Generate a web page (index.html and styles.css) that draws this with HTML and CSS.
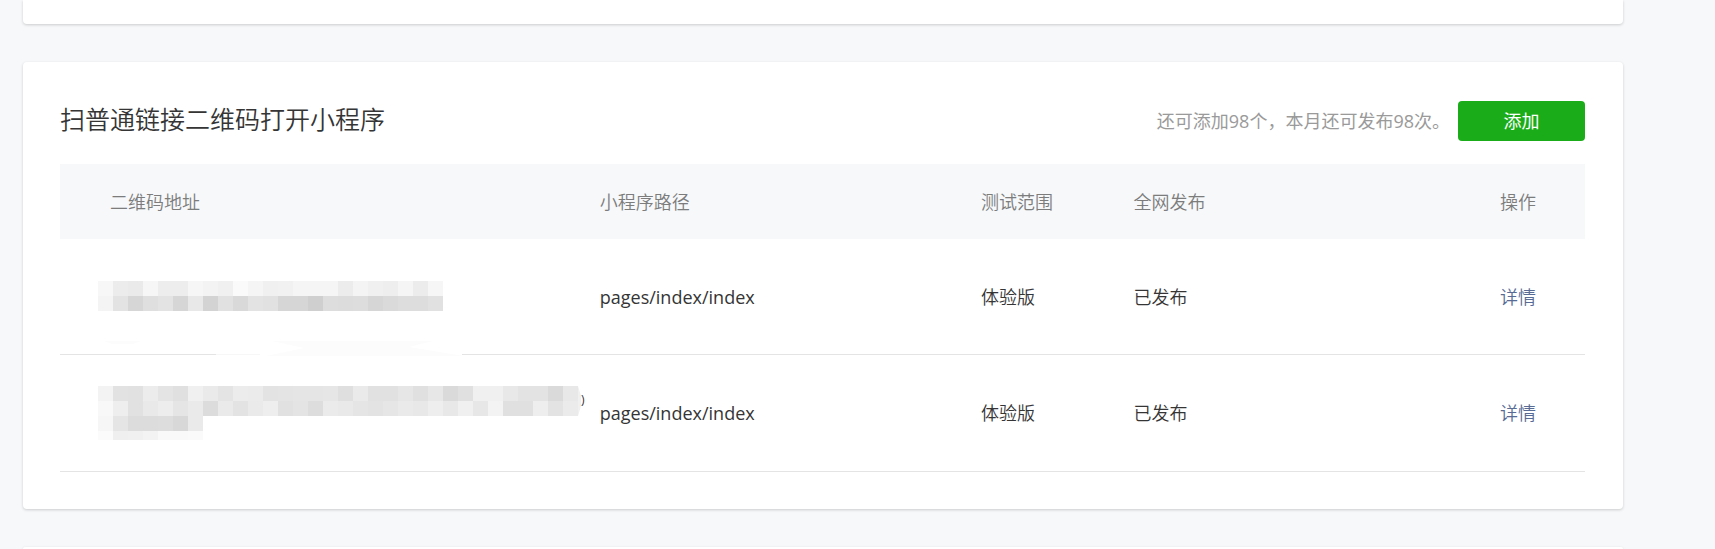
FILE: index.html
```html
<!DOCTYPE html>
<html lang="zh-CN">
<head>
<meta charset="utf-8">
<title>扫普通链接二维码打开小程序</title>
<link rel="stylesheet" href="styles.css">
</head>
<body>
<main class="page">
  <section class="card card-previous"></section>
  <section class="card card-links">
    <header class="card-head">
      <h2 class="card-title">扫普通链接二维码打开小程序</h2>
      <div class="card-actions">
        <span class="quota">还可添加98个，本月还可发布98次。</span>
        <button class="btn-add" type="button">添加</button>
      </div>
    </header>
    <table class="links">
      <colgroup>
        <col class="col-url"><col class="col-path"><col class="col-scope"><col class="col-publish"><col>
      </colgroup>
      <thead>
        <tr><th>二维码地址</th><th>小程序路径</th><th>测试范围</th><th>全网发布</th><th class="op">操作</th></tr>
      </thead>
      <tbody>
        <tr>
          <td class="url">
            <svg class="mosaic" width="345" height="32" data-rows="f7eceaf6ededf6f3f0faf5f0f1f5f5f5ecf4f0eef5ecf6 f4e3d6dfe3d6e8d3e1d9e3e1d6d6cfdddcddd6dadddde1" aria-hidden="true">
              <path fill="#fff" d="M118 72h246v4H118z"/>
              <path fill="#f7f7f7" d="M118 73h44v1h-44z"/>
              <path fill="#fcfcfc" d="M6 60h37l-8 3H14zM174 60h161l-24 6 24 4 31 5H168l38-8z"/>
            </svg>
          </td>
          <td class="path">pages/index/index</td><td>体验版</td><td>已发布</td>
          <td class="op"><a href="#detail-1">详情</a></td>
        </tr>
        <tr>
          <td class="url">
            <svg class="mosaic" width="488" height="54" data-rows="f3e2e1ece4e0f0eae4ecebe3e4e5e5e6dfeae1e1e6e0e7dae0f0f0e8e3e3dae8 f8eee1e9ede5eadceae3eaeee1e4ddebe9e5e3e6eae8eee8f0e7f3e0e0eee3eb f6e5dcdcddd8ea fbeff0f3f9f9fa" aria-hidden="true">
              <path fill="#f0f0f0" d="M480 0l3 10v10l-3 10z"/>
              <text class="remnant" x="483" y="18">)</text>
            </svg>
          </td>
          <td class="path">pages/index/index</td><td>体验版</td><td>已发布</td>
          <td class="op"><a href="#detail-2">详情</a></td>
        </tr>
      </tbody>
    </table>
  </section>
  <section class="card card-next"></section>
</main>
<script src="mosaic.js"></script>
</body>
</html>
```
FILE: styles.css
```css
* { box-sizing: border-box; }
html { background: #f6f8fa; }
body {
  margin: 0;
  color: #353535;
  font-family: "Open Sans", "Noto Sans CJK SC", sans-serif;
  font-size: 18px;
  font-weight: 350;
  line-height: 28px;
}
.page {
  display: flex;
  flex-direction: column;
  gap: 38px;
  min-height: 100vh;
  padding: 0 92px 0 23px;
}
.card {
  background: #fff;
  border-radius: 4px;
  box-shadow: 0 1px 3px rgba(0, 0, 0, 0.18);
}
.card-previous {
  height: 24px;
  border-top-left-radius: 0;
  border-top-right-radius: 0;
}
.card-next {
  flex: 1;
  border-bottom-left-radius: 0;
  border-bottom-right-radius: 0;
}
.card-links { padding: 39px 38px 37px 37px; }
.card-head {
  display: flex;
  align-items: flex-start;
  justify-content: space-between;
  margin-bottom: 23px;
}
.card-title {
  margin: 0;
  font-size: 25px;
  line-height: 36px;
  font-weight: 350;
}
.card-actions {
  display: flex;
  align-items: center;
  gap: 8px;
}
.quota {
  color: #9a9a9a;
  font-weight: 400;
}
.btn-add {
  width: 127px;
  height: 40px;
  border: 0;
  border-radius: 4px;
  background: #1aad19;
  color: #fff;
  font: inherit;
  font-weight: 400;
  cursor: pointer;
}
.links {
  width: 100%;
  table-layout: fixed;
  border-collapse: separate;
  border-spacing: 0;
}
.col-url { width: 35%; }
.col-path { width: 25%; }
.col-scope { width: 10%; }
.col-publish { width: 15%; }
.links th, .links td {
  padding: 0 0 0 6px;
  text-align: left;
  font-weight: inherit;
}
.links th {
  height: 75px;
  background: #f6f8fa;
  color: #7c7c7c;
}
.links th:first-child { padding-left: 50px; }
.links td {
  height: 116px;
  border-bottom: 1px solid #e4e4e4;
}
.links tr:last-child td { height: 117px; }
.links .path { font-weight: 400; }
.links .url { padding-left: 38px; }
.links .op { padding-right: 49px; text-align: right; }
.links a { color: #576b95; text-decoration: none; }
.mosaic {
  display: block;
  overflow: visible;
}
.remnant { font-size: 12px; font-weight: 400; fill: #353535; }
```
FILE: mosaic.js
```javascript
// Paints each masked address as rows of 15px grey cells.
const CELL = 15;
document.querySelectorAll('.mosaic').forEach((svg) => {
  const limit = Number(svg.getAttribute('height'));
  svg.dataset.rows.split(' ').forEach((row, r) => {
    row.match(/../g).forEach((grey, c) => {
      const rect = document.createElementNS('http://www.w3.org/2000/svg', 'rect');
      rect.setAttribute('x', c * CELL);
      rect.setAttribute('y', r * CELL);
      rect.setAttribute('width', CELL);
      rect.setAttribute('height', Math.min(CELL, limit - r * CELL));
      rect.setAttribute('fill', '#' + grey.repeat(3));
      svg.appendChild(rect);
    });
  });
});
```
